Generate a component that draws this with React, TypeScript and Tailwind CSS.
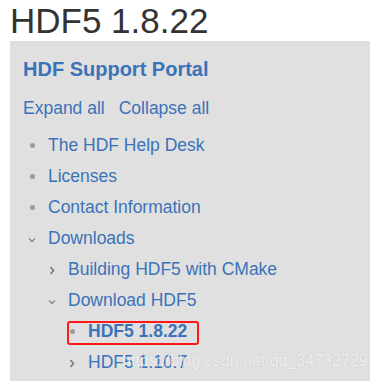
import React from "react";

type Item = { label: string; level: number; marker: "dot" | "down" | "right"; bold?: boolean; boxed?: boolean };

const items: Item[] = [
  { label: "The HDF Help Desk", level: 1, marker: "dot" },
  { label: "Licenses", level: 1, marker: "dot" },
  { label: "Contact Information", level: 1, marker: "dot" },
  { label: "Downloads", level: 1, marker: "down" },
  { label: "Building HDF5 with CMake", level: 2, marker: "right" },
  { label: "Download HDF5", level: 2, marker: "down" },
  { label: "HDF5 1.8.22", level: 3, marker: "dot", bold: true, boxed: true },
  { label: "HDF5 1.10.7", level: 3, marker: "right" },
];

function Marker({ kind }: { kind: Item["marker"] }) {
  if (kind === "dot") return <span className="block w-[5px] h-[5px] rounded-full bg-[#9a9a9a]" />;
  if (kind === "down")
    return (
      <svg width="8" height="6" viewBox="0 0 8 6" className="mt-[2px]">
        <path d="M1 1.5 L4 4.5 L7 1.5" fill="none" stroke="#8a8a8a" strokeWidth="1.5" />
      </svg>
    );
  return (
    <svg width="6" height="9" viewBox="0 0 6 9" className="mt-[1px]">
      <path d="M1.5 1 L4.5 4.5 L1.5 8" fill="none" stroke="#7a7a7a" strokeWidth="1.6" />
    </svg>
  );
}

const padByLevel: Record<number, string> = { 1: "pl-[14px]", 2: "pl-[34px]", 3: "pl-[54px]" };

export default function App() {
  return (
    <div className="relative w-[378px] h-[381px] overflow-hidden bg-white" style={{ fontFamily: '"Liberation Sans", Arial, sans-serif' }}>
      <h1 className="pl-[10px] text-[35px] leading-[41px] text-[#333333] font-normal">HDF5 1.8.22</h1>
      <div className="ml-[10px] w-[360px] h-[340px] bg-[#e0e0e0] pt-[14px]">
        <div className="pl-[13px] text-[20px] leading-[28px] font-bold text-[#3b73b9]">HDF Support Portal</div>
        <div className="pl-[13px] mt-[13px] flex gap-[14px] text-[17.5px] leading-[25px] text-[#3b73b9]">
          <span>Expand all</span>
          <span>Collapse all</span>
        </div>
        <ul className="mt-[9px]">
          {items.map((it) => (
            <li key={it.label} className={`relative flex items-center h-[31px] text-[17.5px] text-[#3b73b9] ${padByLevel[it.level]}`}>
              <span className="w-[16px] flex justify-center items-center">
                <Marker kind={it.marker} />
              </span>
              <span className={`ml-[8px] ${it.bold ? "font-bold" : ""}`}>{it.label}</span>
              {it.boxed && (
                <span className="absolute left-[57px] top-[5px] w-[132px] h-[24px] border-[2.5px] border-[#ff1a1a] rounded-[3px]" />
              )}
            </li>
          ))}
        </ul>
      </div>
      <div
        className="absolute left-[122px] top-[352px] text-[16px] leading-[18px] text-[rgba(255,255,255,0.75)] whitespace-nowrap"
        style={{ textShadow: "0 0 1px rgba(120,120,120,0.35)" }}
      >
        https://blog.csdn.net/qq_34732729
      </div>
    </div>
  );
}
